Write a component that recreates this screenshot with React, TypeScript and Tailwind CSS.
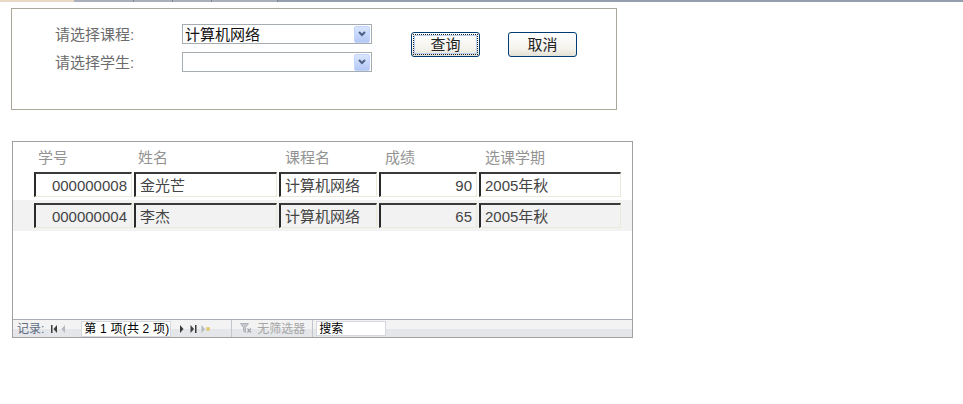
import React from "react";

const rows = [
  { id: "000000008", name: "金光芒", course: "计算机网络", score: "90", term: "2005年秋" },
  { id: "000000004", name: "李杰", course: "计算机网络", score: "65", term: "2005年秋" },
];

const font = "font-['Liberation_Sans','Noto_Sans_CJK_SC',sans-serif]";

function SelectBox({ value }: { value: string }) {
  return (
    <div className="flex h-[20px] w-[190px] items-center border border-[#a5acb2] bg-white px-[1px]">
      <span className="flex-1 pl-[1px] text-[15px] leading-none text-[#111]">{value}</span>
      <div className="flex h-[17px] w-[16px] items-center justify-center rounded-[2px] border border-[#c3d3fd] bg-[linear-gradient(#dae6fe,#b4c8f5)]">
        <svg width="8" height="6" viewBox="0 0 8 6">
          <path d="M1 1 L4 4 L7 1" stroke="#4d6185" strokeWidth="2" fill="none" />
        </svg>
      </div>
    </div>
  );
}

function XpButton({ label, focused }: { label: string; focused?: boolean }) {
  return (
    <div className="h-[25px] w-[69px] rounded-[3px] border border-[#003c74] bg-[linear-gradient(#ffffff,#f3f2ec_70%,#e3e0d3)] p-[1px]">
      <div
        className={`flex h-full w-full items-center justify-center text-[15px] leading-none text-[#222] ${
          focused ? "border border-dotted border-[#222] shadow-[inset_0_0_0_1px_#b9cff5]" : ""
        }`}
      >
        {label}
      </div>
    </div>
  );
}

function Field({ text, right, shade }: { text: string; right?: boolean; shade?: boolean }) {
  return (
    <div
      className={`flex h-[25px] items-center border-t-2 border-l-2 border-r border-b border-t-[#3a3a3a] border-l-[#2a2a2a] border-r-[#ece9d8] border-b-[#ece9d8] text-[15px] leading-none text-[#444] ${
        right ? "justify-end pr-[4px]" : "pl-[4px]"
      } ${shade ? "bg-[#f2f2f2]" : "bg-white"}`}
    >
      {text}
    </div>
  );
}

export default function App() {
  return (
    <div className={`h-[404px] w-[963px] bg-white ${font}`}>
      {/* top window strip */}
      <div className="flex h-[2px] w-full">
        <div className="w-[74px] bg-[#e9d9c3]" />
        <div className="w-[60px] border-r border-[#7d8696] bg-[#a9b0bc]" />
        <div className="w-[39px] border-r border-[#7d8696] bg-[#a9b0bc]" />
        <div className="w-[39px] border-r border-[#7d8696] bg-[#a9b0bc]" />
        <div className="w-[66px] border-r border-[#7d8696] bg-[#a9b0bc]" />
        <div className="flex-1 bg-[#959eae]" />
      </div>

      {/* query form */}
      <div className="ml-[11px] mt-[6px] flex h-[102px] w-[606px] border border-[#aca899] pl-[43px] pt-[15px]">
        <div className="flex flex-col gap-[8px]">
          <div className="flex items-center">
            <span className="w-[127px] text-[15px] leading-none text-[#6b6b6b]">请选择课程:</span>
            <SelectBox value="计算机网络" />
          </div>
          <div className="flex items-center">
            <span className="w-[127px] text-[15px] leading-none text-[#6b6b6b]">请选择学生:</span>
            <SelectBox value="" />
          </div>
        </div>
        <div className="ml-[39px] mt-[8px] flex gap-[28px]">
          <XpButton label="查询" focused />
          <XpButton label="取消" />
        </div>
      </div>

      {/* results */}
      <div className="ml-[12px] mt-[31px] flex h-[197px] w-[621px] flex-col border border-[#a0a0a0]">
        <div className="grid h-[27px] grid-cols-[98px_143px_98px_98px_142px] items-center gap-x-[2px] pl-[21px] pt-[3px] text-[15px] leading-none text-[#939393]">
          <span className="pl-[4px]">学号</span>
          <span className="pl-[4px]">姓名</span>
          <span className="pl-[6px]">课程名</span>
          <span className="pl-[6px]">成绩</span>
          <span className="pl-[6px]">选课学期</span>
        </div>
        {rows.map((r, i) => (
          <div
            key={r.id}
            className={`grid h-[31px] grid-cols-[98px_143px_98px_98px_142px] items-center gap-x-[2px] pl-[21px] ${
              i === 1 ? "bg-[#f2f2f2]" : "bg-white"
            }`}
          >
            <Field text={r.id} right shade={i === 1} />
            <Field text={r.name} shade={i === 1} />
            <Field text={r.course} shade={i === 1} />
            <Field text={r.score} right shade={i === 1} />
            <Field text={r.term} shade={i === 1} />
          </div>
        ))}
        <div className="flex-1" />

        {/* record navigator */}
        <div className="flex h-[18px] items-center whitespace-nowrap border-t border-[#a9adb5] bg-[linear-gradient(#f3f3f4_0%,#f3f3f4_50%,#e4e6ea_50%,#e4e6ea_100%)] text-[12px] leading-none">
          <span className="ml-[4px] text-[#5d6a80]">记录:</span>
          <svg className="ml-[7px]" width="7" height="8" viewBox="0 0 7 8">
            <rect x="0" y="0" width="1.5" height="8" fill="#3c3c3c" />
            <path d="M6 0 L2.5 4 L6 8 Z" fill="#3c3c3c" />
          </svg>
          <svg className="ml-[3px]" width="5" height="8" viewBox="0 0 5 8">
            <path d="M4 0 L0.5 4 L4 8 Z" fill="#b4b8bf" />
          </svg>
          <div className="ml-[15px] flex h-[16px] w-[90px] shrink-0 items-center overflow-hidden whitespace-nowrap border border-[#d5d8de] bg-white pl-[2px] tracking-[0.2px] text-black">
            第 1 项(共 2 项)
          </div>
          <svg className="ml-[8px]" width="5" height="8" viewBox="0 0 5 8">
            <path d="M1 0 L4.5 4 L1 8 Z" fill="#3c3c3c" />
          </svg>
          <svg className="ml-[6px]" width="7" height="8" viewBox="0 0 7 8">
            <path d="M0.5 0 L4 4 L0.5 8 Z" fill="#3c3c3c" />
            <rect x="5" y="0" width="1.5" height="8" fill="#3c3c3c" />
          </svg>
          <svg className="ml-[4px]" width="9" height="8" viewBox="0 0 9 8">
            <path d="M0.5 0 L4 4 L0.5 8 Z" fill="#b4b8bf" />
            <rect x="5" y="2" width="4" height="4" fill="#e9dca0" />
            <path d="M5 4 H9 M7 2 V6" stroke="#d8c46a" strokeWidth="1" />
          </svg>
          <div className="ml-[21px] h-full w-px bg-[#c2c6cd]" />
          <svg className="ml-[8px]" width="12" height="11" viewBox="0 0 12 11">
            <path d="M0.5 0.5 H8.5 L5.5 4.5 V9.5 L3.5 8 V4.5 Z" fill="#c5c8ce" stroke="#a3a7ae" strokeWidth="0.8" />
            <path d="M7.5 5.5 L11 9.5 M11 5.5 L7.5 9.5" stroke="#a3a7ae" strokeWidth="1.2" />
          </svg>
          <span className="ml-[5px] text-[#a6a6a6]">无筛选器</span>
          <div className="ml-[7px] h-full w-px bg-[#c2c6cd]" />
          <div className="ml-[3px] flex h-[15px] w-[70px] items-center border border-[#d5d8de] bg-white pl-[2px] text-black">
            搜索
          </div>
        </div>
      </div>
    </div>
  );
}
